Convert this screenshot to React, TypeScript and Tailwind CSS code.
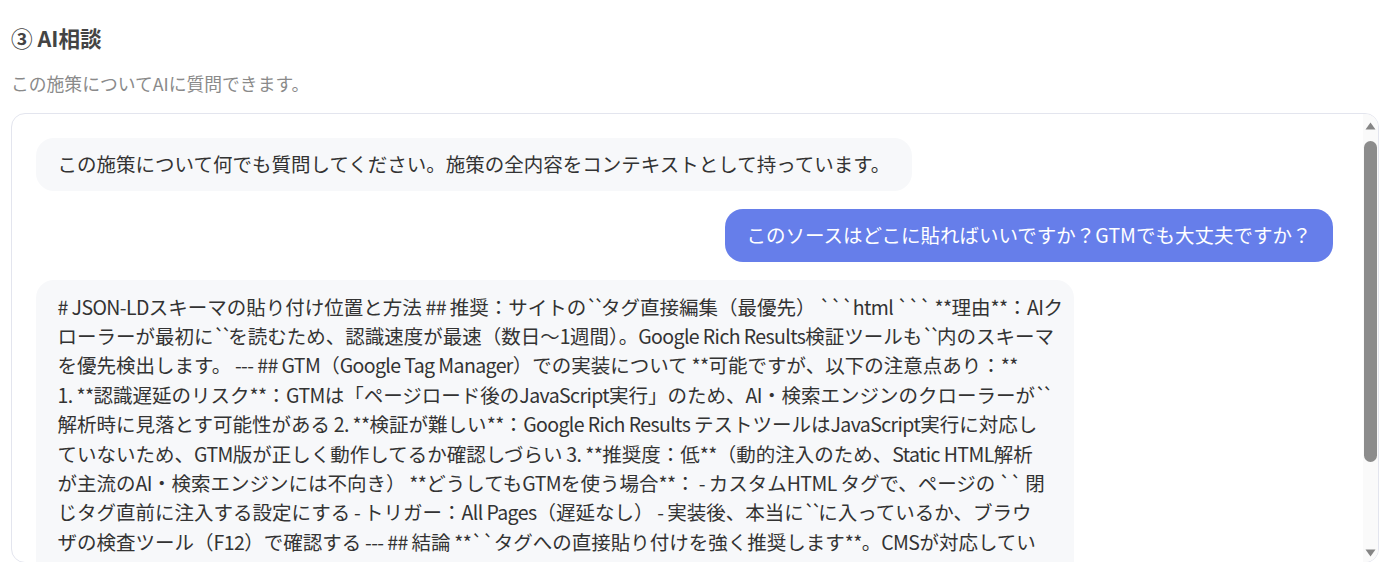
const intro = "この施策について何でも質問してください。施策の全内容をコンテキストとして持っています。";
const question = "このソースはどこに貼ればいいですか？GTMでも大丈夫ですか？";

// 回答は参照画面と同じ位置で改行する
const answerLines = [
  "# JSON-LDスキーマの貼り付け位置と方法 ## 推奨：サイトの``タグ直接編集（最優先） ```html ``` **理由**：AIク",
  "ローラーが最初に``を読むため、認識速度が最速（数日〜1週間）。Google Rich Results検証ツールも``内のスキーマ",
  "を優先検出します。 --- ## GTM（Google Tag Manager）での実装について **可能ですが、以下の注意点あり：**",
  "1. **認識遅延のリスク**：GTMは「ページロード後のJavaScript実行」のため、AI・検索エンジンのクローラーが``",
  "解析時に見落とす可能性がある 2. **検証が難しい**：Google Rich Results テストツールはJavaScript実行に対応し",
  "ていないため、GTM版が正しく動作してるか確認しづらい 3. **推奨度：低**（動的注入のため、Static HTML解析",
  "が主流のAI・検索エンジンには不向き） **どうしてもGTMを使う場合**： - カスタムHTML タグで、ページの `` 閉",
  "じタグ直前に注入する設定にする - トリガー：All Pages（遅延なし） - 実装後、本当に``に入っているか、ブラウ",
  "ザの検査ツール（F12）で確認する --- ## 結論 **``タグへの直接貼り付けを強く推奨します**。CMSが対応してい",
  "ない場合のみ、GTMでの実装を検討し、公開後にGoogle Rich Results テストで必ず検証してください。",
  "JSON-LDは1ページに複数設置しても問題ありません。",
];

// 半角部分だけ少し詰める（バッククォートは特に詰める）
function Line({ text }: { text: string }) {
  const parts = text.split(/(`+|[\x20-\x7e]+)/).filter(Boolean);
  return (
    <span className="block whitespace-nowrap">
      {parts.map((p, i) =>
        p.startsWith("`") ? (
          <span key={i} className="tracking-[-4.5px]">{p}</span>
        ) : /^[\x20-\x7e]/.test(p) ? (
          <span key={i} className="tracking-[-0.6px]">{p}</span>
        ) : (
          <span key={i}>{p}</span>
        )
      )}
    </span>
  );
}

function Arrow({ down = false }: { down?: boolean }) {
  return (
    <svg width="11" height="8" viewBox="0 0 11 8" className="shrink-0">
      <path d={down ? "M0.5 0.5h10L5.5 7.5z" : "M0.5 7.5h10L5.5 0.5z"} fill="#858585" />
    </svg>
  );
}

export default function App() {
  return (
    <div className="min-h-screen bg-white pl-[11px] pr-[1px] font-['Noto_Sans_CJK_JP',sans-serif]">
      <h3 className="pt-[26px] text-[21.6px] font-bold leading-[24px] text-[#444]">③ AI相談</h3>
      <p className="mt-[21px] text-[17.8px] leading-[24px] text-[#8a8a8a]">この施策についてAIに質問できます。</p>

      <div className="mt-[18px] flex h-[450px] overflow-hidden rounded-[14px] border border-[#e3e5ee]">
        <div className="min-w-0 flex-1 py-6 pl-6 pr-[30px]">
          <div className="flex flex-col gap-[18px]">
            <div className="flex justify-start">
              <div className="max-w-[80%] rounded-[18px] bg-[#f7f8fa] px-[21.6px] py-[12px] text-[19.5px] leading-[28.8px] text-[#333]">
                {intro}
              </div>
            </div>
            <div className="flex justify-end">
              <div className="max-w-[80%] rounded-[18px] bg-[#667eea] px-[21.6px] py-[12px] text-[19.5px] leading-[28.8px] text-white">
                {question}
              </div>
            </div>
            <div className="flex justify-start">
              <div className="w-[80%] rounded-[18px] bg-[#f7f8fa] px-[21.6px] py-[12px] text-[19.5px] leading-[29.4px] text-[#333]">
                {answerLines.map((line, i) => (
                  <Line key={i} text={line} />
                ))}
              </div>
            </div>
          </div>
        </div>

        {/* scrollbar */}
        <div className="flex w-[15px] shrink-0 flex-col items-center bg-[#fafafa] pb-[5px] pt-[8px]">
          <Arrow />
          <div className="mt-[11px] h-[321px] w-[13px] rounded-full bg-[#8c8c8c]" />
          <div className="flex-1" />
          <Arrow down />
        </div>
      </div>
    </div>
  );
}
